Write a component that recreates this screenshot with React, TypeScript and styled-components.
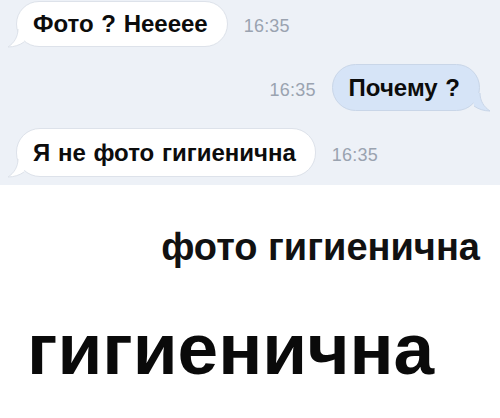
import React from "react";
import styled, { createGlobalStyle } from "styled-components";

const Global = createGlobalStyle`
  html, body { margin: 0; padding: 0; background: #ffffff; }
  body { font-family: "Liberation Sans", Arial, sans-serif; }
`;

const Page = styled.div`
  width: 500px;
  height: 418px;
  display: flex;
  flex-direction: column;
  overflow: hidden;
`;

const Chat = styled.div`
  height: 185px;
  background: #edf1f7;
  display: flex;
  flex-direction: column;
  gap: 17px;
  padding: 1px 20px 0 16px;
  box-sizing: border-box;
`;

const Row = styled.div<{ $out?: boolean }>`
  display: flex;
  align-items: center;
  justify-content: ${(p) => (p.$out ? "flex-end" : "flex-start")};
  gap: 16px;
`;

const Bubble = styled.div<{ $out?: boolean; $h: number }>`
  position: relative;
  height: ${(p) => p.$h}px;
  display: flex;
  align-items: center;
  padding: 0 19px 0 16px;
  border-radius: 24px;
  background: ${(p) => (p.$out ? "#d6e4f7" : "#ffffff")};
  border: 1px solid ${(p) => (p.$out ? "#c9d6e8" : "#dde2ea")};
  box-sizing: border-box;
  font-size: 24px;
  font-weight: 700;
  color: #0c0c0c;
  word-spacing: 1px;
`;

const Tail = styled.svg<{ $out?: boolean }>`
  position: absolute;
  bottom: -1px;
  ${(p) => (p.$out ? "right: -11px;" : "left: -9px;")}
  width: 18px;
  height: 18px;
  overflow: visible;
`;

const Time = styled.span`
  font-size: 18px;
  color: #9aa3b0;
  margin-top: 5px;
  letter-spacing: 0.2px;
`;

const Bottom = styled.div`
  flex: 1;
  background: #ffffff;
  display: flex;
  flex-direction: column;
`;

const Small = styled.div`
  align-self: flex-end;
  margin: 43px 20px 0 0;
  font-size: 38px;
  font-weight: 700;
  color: #111;
  line-height: 1;
`;

const Big = styled.div`
  margin: 46px 0 0 27px;
  font-size: 73px;
  font-weight: 700;
  color: #0a0a0a;
  line-height: 1;
  letter-spacing: 0px;
`;

function InTail() {
  return (
    <Tail viewBox="0 0 18 18">
      <path d="M10 0 C10 8 6 14 0 18 C6 18 12 16 16 13 L18 0 Z" fill="#ffffff" />
      <path d="M10 0 C10 8 6 14 0 18 C6 18 12 16 16 13" fill="none" stroke="#dde2ea" strokeWidth="1" />
    </Tail>
  );
}

function OutTail() {
  return (
    <Tail $out viewBox="0 0 18 18">
      <path d="M8 0 C8 8 12 14 18 18 C12 18 6 16 2 13 L0 0 Z" fill="#d6e4f7" />
      <path d="M8 0 C8 8 12 14 18 18 C12 18 6 16 2 13" fill="none" stroke="#c9d6e8" strokeWidth="1" />
    </Tail>
  );
}

export default function App() {
  return (
    <Page>
      <Global />
      <Chat>
        <Row>
          <Bubble $h={46}>
            <InTail />
            Фото ? Неееее
          </Bubble>
          <Time>16:35</Time>
        </Row>
        <Row $out>
          <Time>16:35</Time>
          <Bubble $out $h={47}>
            <OutTail />
            Почему ?
          </Bubble>
        </Row>
        <Row>
          <Bubble $h={49}>
            <InTail />
            Я не фото гигиенична
          </Bubble>
          <Time>16:35</Time>
        </Row>
      </Chat>
      <Bottom>
        <Small>фото гигиенична</Small>
        <Big>гигиенична</Big>
      </Bottom>
    </Page>
  );
}
